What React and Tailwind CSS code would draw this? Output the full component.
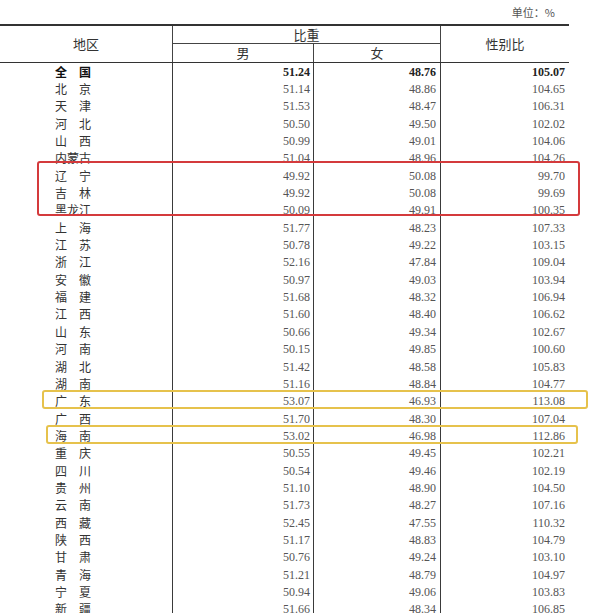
const rows = [
  ['全国', '51.24', '48.76', '105.07'],
  ['北京', '51.14', '48.86', '104.65'],
  ['天津', '51.53', '48.47', '106.31'],
  ['河北', '50.50', '49.50', '102.02'],
  ['山西', '50.99', '49.01', '104.06'],
  ['内蒙古', '51.04', '48.96', '104.26'],
  ['辽宁', '49.92', '50.08', '99.70'],
  ['吉林', '49.92', '50.08', '99.69'],
  ['黑龙江', '50.09', '49.91', '100.35'],
  ['上海', '51.77', '48.23', '107.33'],
  ['江苏', '50.78', '49.22', '103.15'],
  ['浙江', '52.16', '47.84', '109.04'],
  ['安徽', '50.97', '49.03', '103.94'],
  ['福建', '51.68', '48.32', '106.94'],
  ['江西', '51.60', '48.40', '106.62'],
  ['山东', '50.66', '49.34', '102.67'],
  ['河南', '50.15', '49.85', '100.60'],
  ['湖北', '51.42', '48.58', '105.83'],
  ['湖南', '51.16', '48.84', '104.77'],
  ['广东', '53.07', '46.93', '113.08'],
  ['广西', '51.70', '48.30', '107.04'],
  ['海南', '53.02', '46.98', '112.86'],
  ['重庆', '50.55', '49.45', '102.21'],
  ['四川', '50.54', '49.46', '102.19'],
  ['贵州', '51.10', '48.90', '104.50'],
  ['云南', '51.73', '48.27', '107.16'],
  ['西藏', '52.45', '47.55', '110.32'],
  ['陕西', '51.17', '48.83', '104.79'],
  ['甘肃', '50.76', '49.24', '103.10'],
  ['青海', '51.21', '48.79', '104.97'],
  ['宁夏', '50.94', '49.06', '103.83'],
  ['新疆', '51.66', '48.34', '106.85'],
];

const cjk = { fontFamily: '"Noto Sans CJK SC", sans-serif' };
const num = { fontFamily: '"Liberation Serif", serif' };

function Name({ text, bold }) {
  return (
    <div
      className={`ml-[55px] flex w-[36px] justify-between text-[12px] leading-none ${bold ? 'font-bold text-[#111]' : 'text-[#333]'}`}
      style={cjk}
    >
      {text.split('').map((c, i) => (
        <span key={i}>{c}</span>
      ))}
    </div>
  );
}

export default function App() {
  return (
    <div className="h-[613px] w-[595px] overflow-hidden bg-white">
      <div className="flex h-[24px] items-center justify-end pr-[40px] text-[11px] text-[#555]" style={cjk}>
        单位：%
      </div>

      <div className="relative w-[569px]">
        {/* header */}
        <div className="grid grid-cols-[172px_141px_127px_129px] grid-rows-[18px_18px] border-t-2 border-b-[1.5px] border-[#333] text-[13px] text-[#333]" style={cjk}>
          <div className="row-span-2 flex items-center justify-center">地区</div>
          <div className="col-span-2 flex items-center justify-center border-l-[1.5px] border-b border-[#444]">比重</div>
          <div className="row-span-2 flex items-center justify-center border-l-[1.5px] border-[#444]">性别比</div>
          <div className="flex items-center justify-center border-l-[1.5px] border-[#444]">男</div>
          <div className="flex items-center justify-center border-l-[1.5px] border-[#444]">女</div>
        </div>

        {/* body */}
        <div className="grid grid-cols-[172px_141px_127px_129px]">
          {rows.map(([name, m, f, r], i) => {
            const bold = i === 0;
            const numCls = `flex h-[17.35px] items-center justify-end border-l-[1.5px] border-[#3a3a3a] pr-[3px] text-[12px] ${bold ? 'font-bold text-[#222]' : 'text-[#555]'}`;
            return (
              <div key={name} className="contents">
                <div className="flex h-[17.35px] items-center">
                  <Name text={name} bold={bold} />
                </div>
                <div className={numCls} style={num}>{m}</div>
                <div className={numCls + ' pr-[4px]'} style={num}>{f}</div>
                <div className={numCls + ' pr-[4px]'} style={num}>{r}</div>
              </div>
            );
          })}
        </div>

        {/* highlight boxes */}
        <div className="pointer-events-none absolute left-[37px] top-[137px] h-[55px] w-[543px] rounded-[3px] border-2 border-[#d43a3c]" />
        <div className="pointer-events-none absolute left-[42px] top-[366px] h-[19px] w-[546px] rounded-[3px] border-2 border-[#e6c24c]" />
        <div className="pointer-events-none absolute left-[46px] top-[401px] h-[19px] w-[532px] rounded-[3px] border-2 border-[#e6c24c]" />
      </div>
    </div>
  );
}
